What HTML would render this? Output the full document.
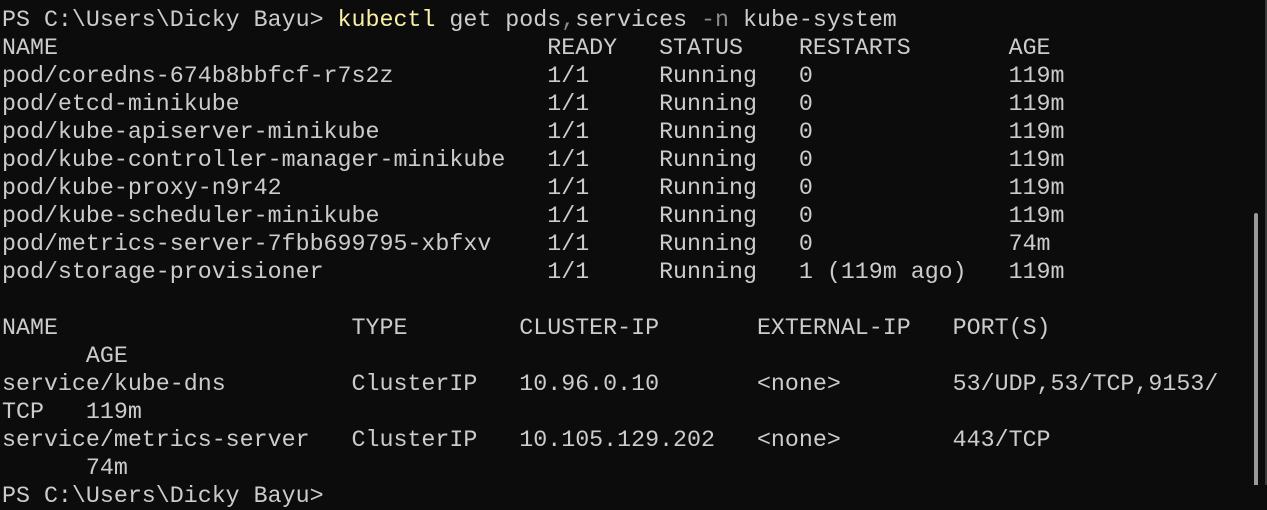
<!DOCTYPE html>
<html><head><meta charset="utf-8"><style>
html,body{margin:0;padding:0;background:#0c0c0c;width:1267px;height:485px;overflow:hidden;}
pre{margin:0;position:absolute;left:2px;top:6px;font-family:"Liberation Mono",monospace;font-size:23.3px;line-height:28px;color:#cccccc;white-space:pre;}
.y{color:#f9f1a5}.g{color:#8a8a8a}
.sb{position:absolute;left:1254px;top:213px;width:4px;height:272px;background:#9a9a9a;border-radius:2px 2px 0 0}
.edge{position:absolute;left:1265px;top:0;width:2px;height:485px;background:#3a3a3a}
</style></head><body>
<pre>PS C:\Users\Dicky Bayu&gt; <span class="y">kubectl</span> get pods<span class="g">,</span>services <span class="g">-n</span> kube-system
NAME                                   READY   STATUS    RESTARTS       AGE
pod/coredns-674b8bbfcf-r7s2z           1/1     Running   0              119m
pod/etcd-minikube                      1/1     Running   0              119m
pod/kube-apiserver-minikube            1/1     Running   0              119m
pod/kube-controller-manager-minikube   1/1     Running   0              119m
pod/kube-proxy-n9r42                   1/1     Running   0              119m
pod/kube-scheduler-minikube            1/1     Running   0              119m
pod/metrics-server-7fbb699795-xbfxv    1/1     Running   0              74m
pod/storage-provisioner                1/1     Running   1 (119m ago)   119m

NAME                     TYPE        CLUSTER-IP       EXTERNAL-IP   PORT(S)
      AGE
service/kube-dns         ClusterIP   10.96.0.10       &lt;none&gt;        53/UDP,53/TCP,9153/
TCP   119m
service/metrics-server   ClusterIP   10.105.129.202   &lt;none&gt;        443/TCP
      74m
PS C:\Users\Dicky Bayu&gt;</pre>
<div class="sb"></div><div class="edge"></div>
</body></html>
